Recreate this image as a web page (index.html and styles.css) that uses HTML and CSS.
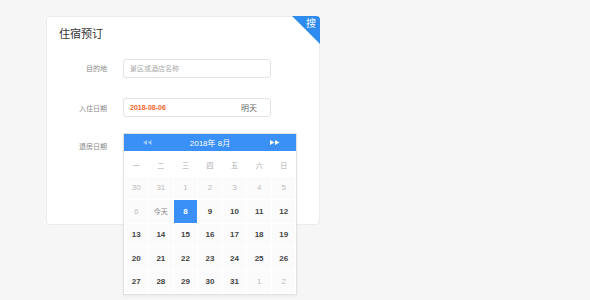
FILE: index.html
```html
<!DOCTYPE html>
<html lang="zh-CN">
<head>
    <meta charset="UTF-8">
    <meta name="viewport" content="width=device-width, initial-scale=1.0">
    <title>住宿预订</title>
    <link rel="stylesheet" href="styles.css">
</head>
<body>
    <div class="booking-card">
        <div class="search-corner"><span>搜</span></div>

        <h1 class="booking-title">住宿预订</h1>

        <div class="form-row">
            <label class="form-label">目的地</label>
            <div class="form-field">
                <input class="form-input" type="text" placeholder="景区或酒店名称">
            </div>
        </div>

        <div class="form-row">
            <label class="form-label">入住日期</label>
            <div class="form-field">
                <div class="form-input date-input">
                    <span class="date-value">2018-08-06</span>
                    <span class="date-hint">明天</span>
                </div>
            </div>
        </div>

        <div class="form-row form-row-last">
            <label class="form-label">退房日期</label>
            <div class="form-field">
                <div class="form-input date-input"></div>

                <div class="calendar">
                    <div class="calendar-head">
                        <span class="cal-nav cal-prev">
                            <svg width="9" height="5" viewBox="0 0 9 5"><path d="M4 0v5L0 2.5zM8.5 0v5L4.5 2.5z" fill="currentColor"/></svg>
                        </span>
                        <span class="cal-title">2018年 8月</span>
                        <span class="cal-nav cal-next">
                            <svg width="10" height="5" viewBox="0 0 10 5"><path d="M0 0v5l4.5-2.5zM5 0v5l4.5-2.5z" fill="currentColor"/></svg>
                        </span>
                    </div>
                    <div class="calendar-grid">
                        <span class="weekday">一</span>
                        <span class="weekday">二</span>
                        <span class="weekday">三</span>
                        <span class="weekday">四</span>
                        <span class="weekday">五</span>
                        <span class="weekday">六</span>
                        <span class="weekday">日</span>

                        <span class="day off">30</span>
                        <span class="day off">31</span>
                        <span class="day off">1</span>
                        <span class="day off">2</span>
                        <span class="day off">3</span>
                        <span class="day off">4</span>
                        <span class="day off">5</span>

                        <span class="day off">6</span>
                        <span class="day today">今天</span>
                        <span class="day active">8</span>
                        <span class="day">9</span>
                        <span class="day">10</span>
                        <span class="day">11</span>
                        <span class="day">12</span>

                        <span class="day">13</span>
                        <span class="day">14</span>
                        <span class="day">15</span>
                        <span class="day">16</span>
                        <span class="day">17</span>
                        <span class="day">18</span>
                        <span class="day">19</span>

                        <span class="day">20</span>
                        <span class="day">21</span>
                        <span class="day">22</span>
                        <span class="day">23</span>
                        <span class="day">24</span>
                        <span class="day">25</span>
                        <span class="day">26</span>

                        <span class="day">27</span>
                        <span class="day">28</span>
                        <span class="day">29</span>
                        <span class="day">30</span>
                        <span class="day">31</span>
                        <span class="day off">1</span>
                        <span class="day off">2</span>
                    </div>
                </div>
            </div>
        </div>
    </div>
</body>
</html>
```

FILE: styles.css
```css
html {
    height: 100%;
}

body {
    box-sizing: border-box;
    min-height: 100%;
    margin: 0;
    padding: 16px 0 0 46px;
    background: #f6f6f6;
    font-family: "Liberation Sans", "Noto Sans CJK SC", sans-serif;
    color: #333;
}

.booking-card {
    position: relative;
    width: 272px;
    height: 207px;
    background: #fff;
    border: 1px solid #ececec;
    border-radius: 4px;
}

.search-corner {
    position: absolute;
    top: -1px;
    right: -1px;
    width: 28px;
    height: 28px;
    background: #2e8cf0;
    clip-path: polygon(0 0, 100% 0, 100% 100%);
    border-top-right-radius: 4px;
}

.search-corner span {
    position: absolute;
    top: 2px;
    right: 4px;
    font-size: 10px;
    line-height: 12px;
    color: #fff;
}

.booking-title {
    margin: 0;
    padding: 9px 0 0 12px;
    font-size: 11px;
    font-weight: normal;
    line-height: 16px;
    color: #333;
}

.form-row {
    display: flex;
    align-items: center;
    margin-top: 15px;
}

.form-row + .form-row {
    margin-top: 20px;
}

.form-row-last {
    margin-top: 19px !important;
}

.form-label {
    width: 60px;
    text-align: right;
    font-size: 7px;
    color: #8a8a8a;
}

.form-field {
    position: relative;
    margin-left: 16px;
}

.form-input {
    box-sizing: border-box;
    width: 148px;
    height: 19px;
    padding: 0 6px;
    border: 1px solid #e3e3e3;
    border-radius: 3px;
    background: #fff;
    font-family: inherit;
    font-size: 7px;
    outline: none;
}

.form-input::placeholder {
    color: #aaa;
}

.date-input {
    display: flex;
    align-items: center;
    justify-content: space-between;
    padding: 0 13px 0 6px;
}

.date-value {
    font-size: 7px;
    font-weight: bold;
    color: #f5642a;
}

.date-hint {
    font-size: 8px;
    color: #666;
}

.calendar {
    position: absolute;
    top: -3px;
    left: 0;
    width: 174px;
    background: #fff;
    border: 1px solid #e2e2e2;
    box-sizing: border-box;
    box-shadow: 0 1px 3px rgba(0,0,0,0.06);
}

.calendar-head {
    display: grid;
    grid-template-columns: 1fr auto 1fr;
    align-items: center;
    height: 17px;
    background: #3a90f6;
    color: #fff;
}

.cal-title {
    font-size: 8px;
}

.cal-nav {
    display: flex;
    color: #fff;
}

.cal-prev {
    justify-self: start;
    margin-left: 19px;
    color: rgba(255,255,255,0.5);
}

.cal-next {
    justify-self: end;
    margin-right: 16px;
}

.calendar-grid {
    display: grid;
    grid-template-columns: repeat(7, 1fr);
    grid-template-rows: 25px repeat(5, 23.5px);
}

.weekday {
    display: flex;
    align-items: center;
    justify-content: center;
    padding-top: 2px;
    font-size: 7px;
    color: #aaa;
}

.day {
    display: flex;
    align-items: center;
    justify-content: center;
    margin: 0.5px;
    background: #fbfbfb;
    font-size: 8px;
    font-weight: bold;
    color: #444;
}

.day.off {
    font-weight: normal;
    color: #bbb;
}

.day.today {
    font-size: 7px;
    font-weight: normal;
    color: #888;
}

.day.active {
    background: #3a90f6;
    color: #fff;
}
```
